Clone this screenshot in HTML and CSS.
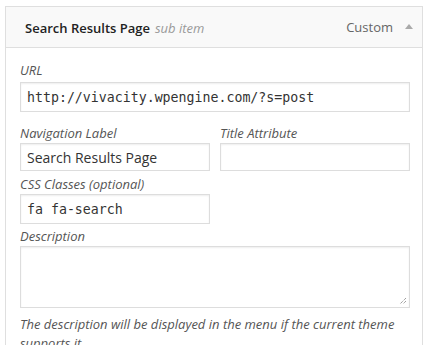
FILE: index.html
```html
<!DOCTYPE html>
<html>
<head>
<meta charset="utf-8">
<link rel="stylesheet" href="styles.css">
</head>
<body>
<div class="menu-item">
  <div class="item-bar">
    <span class="item-title"><span class="title-main">Search Results Page</span><span class="sub-item">sub item</span></span>
    <span class="item-controls"><span class="item-type">Custom</span><span class="arrow"></span></span>
  </div>
  <div class="item-settings">
    <div class="field field-url">
      <label class="lbl">URL</label>
      <div class="input mono wide">http://vivacity.wpengine.com/?s=post</div>
    </div>
    <div class="row">
      <div class="field field-nav">
        <label class="lbl">Navigation Label</label>
        <div class="input half sans">Search Results Page</div>
      </div>
      <div class="field field-title">
        <label class="lbl">Title Attribute</label>
        <div class="input half sans"></div>
      </div>
    </div>
    <div class="field field-css">
      <label class="lbl">CSS Classes (optional)</label>
      <div class="input mono half tall">fa fa-search</div>
    </div>
    <div class="field field-desc">
      <label class="lbl">Description</label>
      <div class="textarea wide"><svg class="grip" width="8" height="8" viewBox="0 0 8 8"><path d="M7 1 L1 7 M7 4 L4 7" stroke="#777" stroke-width="1" stroke-dasharray="1 1" fill="none"/></svg></div>
      <p class="help">The description will be displayed in the menu if the current theme supports it.</p>
    </div>
  </div>
</div>
</body>
</html>
```
FILE: styles.css
```css
html, body {
  margin: 0;
  padding: 0;
  background: #fff;
}
body {
  font-family: "Open Sans", "Liberation Sans", sans-serif;
  color: #333;
  overflow: hidden;
}
.menu-item {
  margin: 6px 0 0 5px;
  width: 418px;
  box-sizing: border-box;
  border: 1px solid #dfdfdf;
  border-bottom: none;
  background: #fff;
}
.item-bar {
  height: 40px;
  background: #f9f9f9;
  border-bottom: 1px solid #dfdfdf;
  display: flex;
  align-items: center;
  justify-content: space-between;
  padding: 0 9px 0 19px;
}
.title-main {
  font-size: 13px;
  font-weight: 600;
  color: #222;
}
.sub-item {
  font-size: 13px;
  font-style: italic;
  color: #999;
  margin-left: 5px;
}
.item-controls {
  display: flex;
  align-items: center;
}
.item-type {
  font-size: 13px;
  color: #666;
}
.arrow {
  width: 0;
  height: 0;
  border-left: 4px solid transparent;
  border-right: 4px solid transparent;
  border-bottom: 5px solid #aaa;
  margin-left: 12px;
  margin-top: -1px;
}
.item-settings {
  padding: 13px 11px 0 14px;
}
.lbl {
  display: block;
  font-size: 13px;
  font-style: italic;
  color: #555;
  line-height: 18px;
}
.input, .textarea {
  box-sizing: border-box;
  border: 1px solid #ddd;
  box-shadow: inset 0 1px 2px rgba(0,0,0,0.07);
  background: #fff;
  color: #333;
  display: flex;
  align-items: center;
  padding: 0 6px;
}
.wide { width: 390px; }
.half { width: 190px; }
.mono {
  font-family: "DejaVu Sans Mono", monospace;
  font-size: 13.25px;
  height: 30px;
}
.sans {
  font-size: 14px;
  height: 28px;
}
.tall { height: 30px; }
.field-url .lbl { margin-bottom: 3px; }
.row {
  display: flex;
  gap: 10px;
  margin-top: 12px;
}
.field-nav .lbl, .field-title .lbl { margin-bottom: 1px; }
.field-css { margin-top: 4px; }
.field-css .lbl { margin-bottom: 1px; }
.field-desc { margin-top: 3px; }
.field-desc .lbl { margin-bottom: 1px; }
.textarea {
  height: 62px;
  position: relative;
}
.grip {
  position: absolute;
  right: 2px;
  bottom: 2px;
}
.help {
  margin: 7px 0 0;
  font-size: 13px;
  font-style: italic;
  color: #555;
  line-height: 19px;
}
```
